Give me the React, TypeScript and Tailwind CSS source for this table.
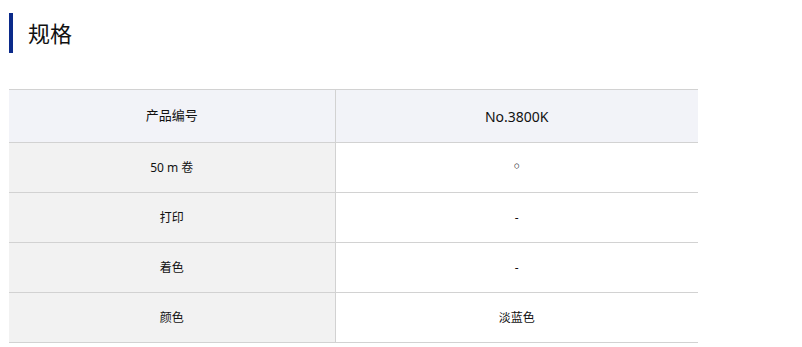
const ROWS = [
  { label: "50 m 卷", value: "◦" },
  { label: "打印", value: "-" },
  { label: "着色", value: "-" },
  { label: "颜色", value: "淡蓝色" },
];

export default function App() {
  return (
    <div className="w-[802px] h-[347px] bg-white overflow-hidden pl-[9px] pt-[13px] font-['Noto_Sans','Noto_Sans_CJK_SC',sans-serif] text-[#111]">
      {/* Heading */}
      <div className="flex items-center h-10 border-l-4 border-[#0b2a8a] pl-[15px]">
        <h2 className="text-[22px] leading-none">规格</h2>
      </div>

      {/* Spec table */}
      <table className="mt-9 w-[689px] border-collapse text-center">
        <tbody>
          <tr className="h-[53px] bg-[#f2f3f8] border-y border-[#d2d2d2]">
            <td className="w-[326px] border-r border-[#d2d2d2] text-[13px]">产品编号</td>
            <td className="text-[14px]">No.3800K</td>
          </tr>
          {ROWS.map((r) => (
            <tr key={r.label} className="h-[50px] border-b border-[#d2d2d2]">
              <td className="bg-[#f2f2f2] border-r border-[#d2d2d2] text-[12px]">{r.label}</td>
              <td className="text-[12px]">
                {r.value === "◦" ? <span className="font-['DejaVu_Sans',sans-serif] text-[16px] leading-none text-black">◦</span> : r.value}
              </td>
            </tr>
          ))}
        </tbody>
      </table>
    </div>
  );
}
